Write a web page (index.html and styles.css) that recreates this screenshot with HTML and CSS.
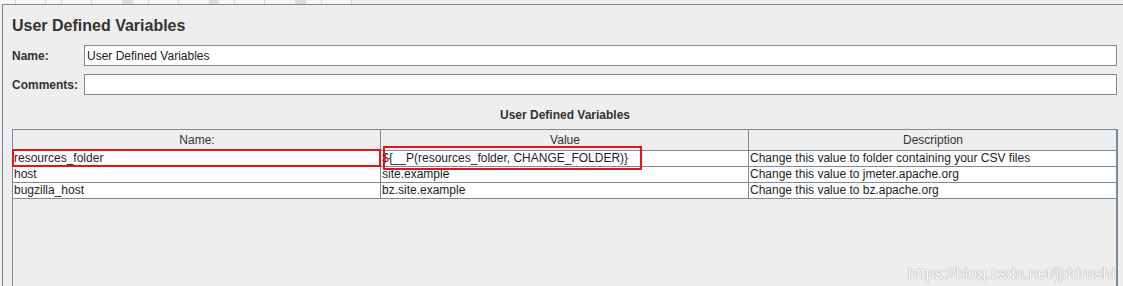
FILE: index.html
```html
<!DOCTYPE html>
<html lang="en">
	<head>
		<meta charset="utf-8" />
		<title>User Defined Variables</title>
		<link rel="stylesheet" href="styles.css">
	</head>
	<body>
		<div class="toolbar-edge">
			<span class="tb-btn"></span><span class="tb-btn"></span><span class="tb-gap"></span><span class="tb-btn"></span><span class="tb-gap"></span><span class="tb-btn"></span><span class="tb-gap"></span><span class="tb-btn"></span>
		</div>
		<div class="panel">
			<h1 class="title">User Defined Variables</h1>
			<div class="field">
				<label for="name">Name:</label>
				<input id="name" type="text" value="User Defined Variables" />
			</div>
			<div class="field">
				<label for="comments">Comments:</label>
				<input id="comments" type="text" value="" />
			</div>
			<div class="caption">User Defined Variables</div>
			<div class="table-pane">
				<table class="vars">
					<colgroup>
						<col class="col-name" />
						<col class="col-value" />
						<col />
					</colgroup>
					<thead>
						<tr><th>Name:</th><th>Value</th><th class="last">Description</th></tr>
					</thead>
					<tbody>
						<tr>
							<td class="marked">resources_folder<span class="mark mark-name"></span></td>
							<td class="marked">${__P(resources_folder, CHANGE_FOLDER)}<span class="mark mark-value"></span></td>
							<td class="last">Change this value to folder containing your CSV files</td>
						</tr>
						<tr>
							<td>host</td>
							<td>site.example</td>
							<td class="last">Change this value to jmeter.apache.org</td>
						</tr>
						<tr>
							<td>bugzilla_host</td>
							<td>bz.site.example</td>
							<td class="last">Change this value to bz.apache.org</td>
						</tr>
					</tbody>
				</table>
			</div>
			<div class="watermark">https://blog.csdn.net/jjddrushi</div>
		</div>
	</body>
</html>
```

FILE: styles.css
```css
html, body {
	margin: 0;
	height: 100%;
	overflow: hidden;
}
body {
	background: #eeeeee;
	font-family: "Liberation Sans", Arial, sans-serif;
	font-size: 12px;
	color: #333333;
}

.toolbar-edge {
	display: flex;
	height: 4px;
	width: 352px;
	background: #f7f7f7;
}
.tb-btn {
	width: 33px;
	border-right: 1px solid #d6d6d6;
	border-left: 1px solid #d6d6d6;
	margin-left: 15px;
}
.tb-gap {
	width: 12px;
	background: #dcdcdc;
	margin-left: 30px;
}

.panel {
	position: relative;
	display: flex;
	flex-direction: column;
	box-sizing: border-box;
	height: 282px;
	margin-left: 2px;
	border-top: 1px solid #7a8a99;
	border-left: 1px solid #7a8a99;
	padding: 11px 5px 0 9px;
	background: #eeeeee;
}

.title {
	margin: 0 0 9px;
	font-size: 16px;
	line-height: 20px;
	font-weight: bold;
	color: #333333;
}

.field {
	display: flex;
	align-items: center;
	height: 21px;
	margin-bottom: 8px;
}
.field label {
	width: 72px;
	font-weight: bold;
	color: #333333;
}
.field input {
	flex: 1;
	box-sizing: border-box;
	height: 21px;
	margin: 0 1px 0 0;
	padding: 0 2px;
	border: 1px solid #7a8a99;
	background: #ffffff;
	font-family: "Liberation Sans", Arial, sans-serif;
	font-size: 12px;
	color: #222222;
	outline: none;
}

.caption {
	margin: 4px 0 6px;
	line-height: 16px;
	text-align: center;
	font-weight: bold;
	color: #333333;
}

.table-pane {
	flex: 1;
	min-height: 0;
	border-top: 1px solid #7a8a99;
	border-left: 1px solid #7a8a99;
	border-right: 2px solid #7a8a99;
}

.vars {
	width: 100%;
	table-layout: fixed;
	border-collapse: separate;
	border-spacing: 0;
}
.col-name,
.col-value {
	width: 368px;
}
.vars th,
.vars td {
	padding: 0 0 0 1px;
	border-right: 1px solid #7a8a99;
	border-bottom: 1px solid #7a8a99;
	white-space: nowrap;
	overflow: visible;
}
.vars th {
	line-height: 20px;
	font-weight: normal;
	text-align: center;
	color: #333333;
	background: #eeeeee;
}
.vars td {
	line-height: 15px;
	background: #ffffff;
	color: #1e1e1e;
}
.vars .last {
	border-right: none;
}

.marked {
	position: relative;
}
.mark {
	position: absolute;
	border: 2px solid #e3141c;
	pointer-events: none;
}
.mark-name {
	left: -1px;
	top: -2px;
	right: -1px;
	bottom: -1px;
}
.mark-value {
	left: 2px;
	top: -5px;
	width: 255px;
	bottom: -4px;
}

.watermark {
	position: absolute;
	right: 8px;
	bottom: 2px;
	font-size: 16px;
	line-height: 20px;
	color: #fdfdfd;
	text-shadow: 0 0 1px #9a9a9a, 0 0 1px #b0b0b0;
}
```
